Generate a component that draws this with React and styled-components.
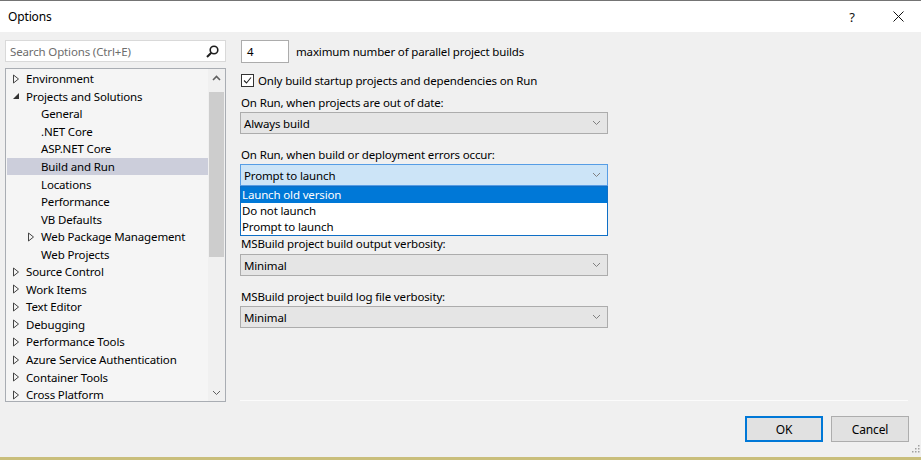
import React from "react";
import styled, { createGlobalStyle } from "styled-components";

const Global = createGlobalStyle`
  html, body { margin: 0; padding: 0; background: #f0f0f0; }
  body { font-family: "Segoe UI", "Noto Sans", "Open Sans", sans-serif; font-size: 11.5px; letter-spacing: -0.15px; color: #000; }
  * { box-sizing: border-box; }
`;

const Dialog = styled.div`
  width: 921px;
  height: 460px;
  background: #f0f0f0;
  display: flex;
  flex-direction: column;
  border-top: 1px solid #747474;
  border-bottom: 3px solid #c9be7b;
  position: relative;
  overflow: hidden;
`;

const TitleBar = styled.div`
  height: 31px;
  background: #fff;
  display: flex;
  align-items: center;
  padding-left: 8px;
  flex-shrink: 0;
`;

const Title = styled.div`
  flex: 1;
  font-size: 12px;
  padding-bottom: 1px;
`;

const TitleButton = styled.div`
  width: 46px;
  height: 31px;
  display: flex;
  align-items: center;
  justify-content: center;
  font-size: 13px;
  color: #111;
`;

const Main = styled.div`
  display: flex;
  padding: 8px 13px 0 5px;
  height: 370px;
  gap: 14px;
  flex-shrink: 0;
`;

const LeftCol = styled.div`
  width: 221px;
  display: flex;
  flex-direction: column;
  gap: 6px;
`;

const Search = styled.div`
  height: 22px;
  background: #fff;
  border: 1px solid #d9d9d9;
  display: flex;
  align-items: center;
  padding: 0 6px 0 4px;
  color: #6d6d6d;
`;

const SearchText = styled.span`
  flex: 1;
`;

const Tree = styled.div`
  flex: 1;
  border: 1px solid #a9adb3;
  background: #f5f5f5;
  display: flex;
  overflow: hidden;
`;

const TreeList = styled.div`
  flex: 1;
  overflow: hidden;
  padding-top: 1px;
`;

const Row = styled.div`
  height: 17.56px;
  display: flex;
  align-items: center;
  margin-left: 1px;
  padding-left: ${(p) => 5 + p.$level * 15}px;
  background: ${(p) => (p.$selected ? "#cccedb" : "transparent")};
  white-space: nowrap;
`;

const Expander = styled.span`
  width: 10px;
  height: 10px;
  display: inline-flex;
  align-items: center;
  justify-content: flex-start;
  margin-right: 4px;
`;

const ScrollBar = styled.div`
  width: 17px;
  background: #f0f0f0;
  display: flex;
  flex-direction: column;
  align-items: center;
`;

const ScrollArrow = styled.div`
  height: 17px;
  width: 17px;
  display: flex;
  align-items: center;
  justify-content: center;
`;

const Thumb = styled.div`
  margin-top: 6px;
  width: 15px;
  height: 165px;
  background: #cdcdcd;
`;

const ScrollFill = styled.div`
  flex: 1;
`;

const RightCol = styled.div`
  flex: 1;
  display: flex;
  flex-direction: column;
`;

const NumRow = styled.div`
  display: flex;
  align-items: center;
  gap: 7px;
  padding-left: 1px;
`;

const NumInput = styled.div`
  width: 48px;
  height: 23px;
  background: #fff;
  border: 1px solid #acacac;
  padding-left: 5px;
  display: flex;
  align-items: center;
`;

const CheckRow = styled.div`
  display: flex;
  align-items: center;
  gap: 4px;
  margin-top: 10px;
  padding-left: 1px;
  height: 15px;
`;

const CheckBox = styled.div`
  width: 13px;
  height: 13px;
  border: 1px solid #333;
  background: #fff;
  display: flex;
  align-items: center;
  justify-content: center;
`;

const Label = styled.div`
  margin-top: ${(p) => p.$mt}px;
  height: 16px;
  line-height: 16px;
  padding-left: 1px;
`;

const ComboWrap = styled.div`
  position: relative;
  width: 368px;
  margin-top: ${(p) => p.$mt ?? 1}px;
`;

const Combo = styled.div`
  height: 22px;
  border: 1px solid ${(p) => (p.$focused ? "#569de5" : "#acacac")};
  background: ${(p) => (p.$focused ? "#cce4f7" : "#e5e5e5")};
  display: flex;
  align-items: center;
  padding: 0 6px 0 3px;
`;

const ComboText = styled.span`
  flex: 1;
`;

const DropList = styled.div`
  position: absolute;
  top: 100%;
  left: 0;
  right: 0;
  background: #fff;
  border: 1px solid #0f6fc6;
  z-index: 2;
`;

const DropItem = styled.div`
  height: 16px;
  line-height: 16px;
  padding-left: 1px;
  background: ${(p) => (p.$active ? "#0078d7" : "#fff")};
  color: ${(p) => (p.$active ? "#fff" : "#000")};
`;

const Separator = styled.div`
  margin-top: auto;
  margin-bottom: 1px;
  height: 1px;
  background: #d5d5d5;
  border-bottom: 1px solid #fbfbfb;
`;

const Footer = styled.div`
  display: flex;
  justify-content: flex-end;
  gap: 8px;
  padding: 14px 12px 0 0;
`;

const Button = styled.div`
  width: 78px;
  height: 26px;
  display: flex;
  align-items: center;
  justify-content: center;
  background: #e1e1e1;
  border: ${(p) => (p.$default ? "2px solid #0078d7" : "1px solid #adadad")};
  font-size: 12px;
`;

const Grip = styled.div`
  position: absolute;
  right: 1px;
  bottom: 1px;
`;

const Collapsed = () => (
  <svg width="8" height="10" viewBox="0 0 8 10">
    <polygon points="1.5,1 1.5,9 6.5,5" fill="none" stroke="#444" strokeWidth="1" />
  </svg>
);

const Expanded = () => (
  <svg width="8" height="10" viewBox="0 0 8 10">
    <polygon points="7,2 7,8 1,8" fill="#333" />
  </svg>
);

const Chevron = ({ up, color = "#444", w = 9 }) => (
  <svg width={w} height="6" viewBox="0 0 9 6">
    <polyline
      points={up ? "1,5 4.5,1.5 8,5" : "1,1 4.5,4.5 8,1"}
      fill="none"
      stroke={color}
      strokeWidth={up ? 1.6 : 1}
    />
  </svg>
);

const tree = [
  { t: "Environment", l: 0, e: "c" },
  { t: "Projects and Solutions", l: 0, e: "o" },
  { t: "General", l: 1 },
  { t: ".NET Core", l: 1 },
  { t: "ASP.NET Core", l: 1 },
  { t: "Build and Run", l: 1, s: true },
  { t: "Locations", l: 1 },
  { t: "Performance", l: 1 },
  { t: "VB Defaults", l: 1 },
  { t: "Web Package Management", l: 1, e: "c" },
  { t: "Web Projects", l: 1 },
  { t: "Source Control", l: 0, e: "c" },
  { t: "Work Items", l: 0, e: "c" },
  { t: "Text Editor", l: 0, e: "c" },
  { t: "Debugging", l: 0, e: "c" },
  { t: "Performance Tools", l: 0, e: "c" },
  { t: "Azure Service Authentication", l: 0, e: "c" },
  { t: "Container Tools", l: 0, e: "c" },
  { t: "Cross Platform", l: 0, e: "c" },
];

export default function App() {
  return (
    <>
      <Global />
      <Dialog>
        <TitleBar>
          <Title>Options</Title>
          <TitleButton>?</TitleButton>
          <TitleButton>
            <svg width="11" height="11" viewBox="0 0 11 11">
              <path d="M0.5 0.5 L10.5 10.5 M10.5 0.5 L0.5 10.5" stroke="#111" strokeWidth="1" />
            </svg>
          </TitleButton>
        </TitleBar>
        <Main>
          <LeftCol>
            <Search>
              <SearchText>Search Options (Ctrl+E)</SearchText>
              <svg width="13" height="13" viewBox="0 0 13 13">
                <circle cx="8" cy="5" r="3.8" fill="none" stroke="#1e1e1e" strokeWidth="1.6" />
                <path d="M5.3 7.7 L1 12" stroke="#1e1e1e" strokeWidth="2" />
              </svg>
            </Search>
            <Tree>
              <TreeList>
                {tree.map((r) => (
                  <Row key={r.t} $level={r.l} $selected={r.s}>
                    <Expander>
                      {r.e === "c" ? <Collapsed /> : r.e === "o" ? <Expanded /> : null}
                    </Expander>
                    {r.t}
                  </Row>
                ))}
              </TreeList>
              <ScrollBar>
                <ScrollArrow>
                  <Chevron up color="#606060" />
                </ScrollArrow>
                <Thumb />
                <ScrollFill />
                <ScrollArrow>
                  <Chevron color="#606060" />
                </ScrollArrow>
              </ScrollBar>
            </Tree>
          </LeftCol>
          <RightCol>
            <NumRow>
              <NumInput>4</NumInput>
              <span>maximum number of parallel project builds</span>
            </NumRow>
            <CheckRow>
              <CheckBox>
                <svg width="11" height="11" viewBox="0 0 11 11">
                  <polyline points="2,5.5 4.5,8 9,2.5" fill="none" stroke="#222" strokeWidth="1.1" />
                </svg>
              </CheckBox>
              <span>Only build startup projects and dependencies on Run</span>
            </CheckRow>
            <Label $mt={7}>On Run, when projects are out of date:</Label>
            <ComboWrap $mt={1}>
              <Combo>
                <ComboText>Always build</ComboText>
                <Chevron color="#808080" />
              </Combo>
            </ComboWrap>
            <Label $mt={13}>On Run, when build or deployment errors occur:</Label>
            <ComboWrap $mt={1}>
              <Combo $focused>
                <ComboText>Prompt to launch</ComboText>
                <Chevron color="#808080" />
              </Combo>
              <DropList>
                <DropItem $active>Launch old version</DropItem>
                <DropItem>Do not launch</DropItem>
                <DropItem>Prompt to launch</DropItem>
              </DropList>
            </ComboWrap>
            <Label $mt={50}>MSBuild project build output verbosity:</Label>
            <ComboWrap $mt={2}>
              <Combo>
                <ComboText>Minimal</ComboText>
                <Chevron color="#808080" />
              </Combo>
            </ComboWrap>
            <Label $mt={13}>MSBuild project build log file verbosity:</Label>
            <ComboWrap $mt={1}>
              <Combo>
                <ComboText>Minimal</ComboText>
                <Chevron color="#808080" />
              </Combo>
            </ComboWrap>
            <Separator />
          </RightCol>
        </Main>
        <Footer>
          <Button $default>OK</Button>
          <Button>Cancel</Button>
        </Footer>
        <Grip>
          <svg width="9" height="9" viewBox="0 0 9 9">
            {[[7, 1], [7, 4], [4, 4], [7, 7], [4, 7], [1, 7]].map(([x, y]) => (
              <rect key={`${x}-${y}`} x={x} y={y} width="1.5" height="1.5" fill="#a0a0a0" />
            ))}
          </svg>
        </Grip>
      </Dialog>
    </>
  );
}
